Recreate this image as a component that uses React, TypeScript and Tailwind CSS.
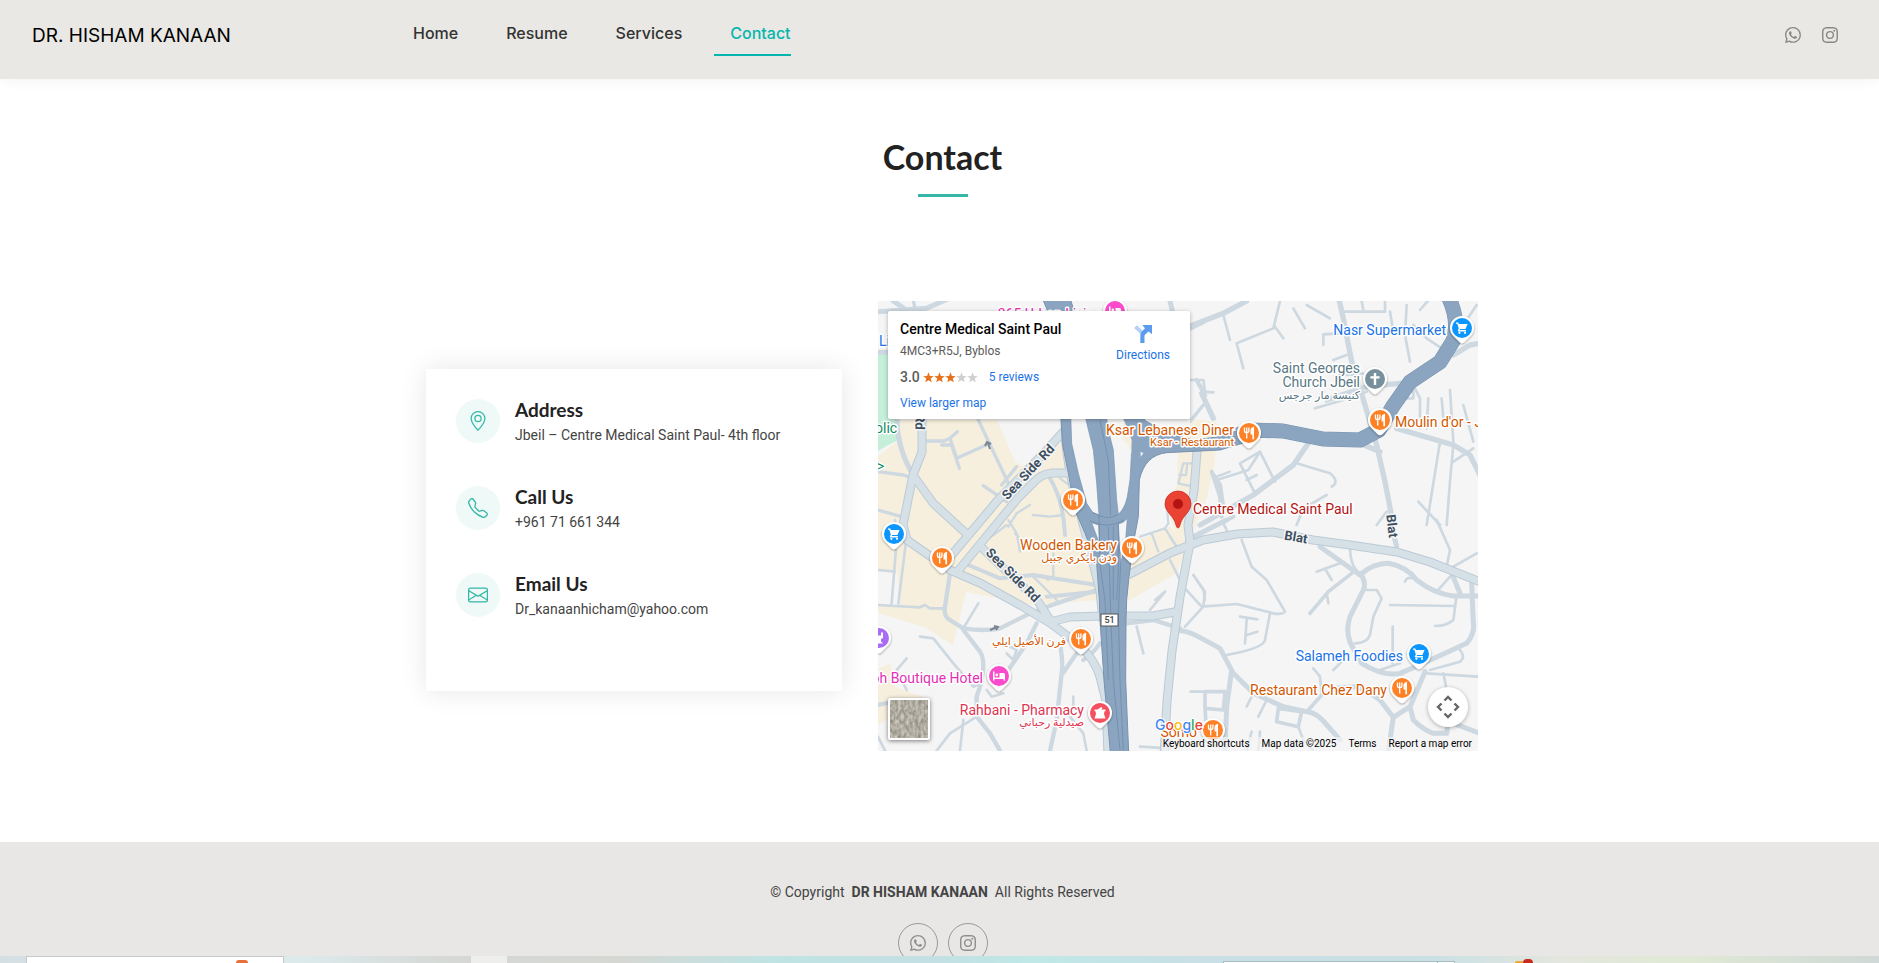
import React from "react";
import { BsWhatsapp, BsInstagram, BsGeoAlt, BsTelephone, BsEnvelope } from "react-icons/bs";
import type { IconType } from "react-icons";

const NAV = ["Home", "Resume", "Services"];

const INFO: { icon: IconType; title: string; text: string }[] = [
  { icon: BsGeoAlt, title: "Address", text: "Jbeil – Centre Medical Saint Paul- 4th floor" },
  { icon: BsTelephone, title: "Call Us", text: "+961 71 661 344" },
  { icon: BsEnvelope, title: "Email Us", text: "Dr_kanaanhicham@yahoo.com" },
];

type Kind = "food" | "cart" | "church" | "bed" | "pharmacy" | "purple";

const KIND_COLOR: Record<Kind, string> = {
  food: "#ff8126",
  cart: "#0b96ff",
  church: "#78909c",
  bed: "#f94bcb",
  pharmacy: "#f5505f",
  purple: "#a96cf5",
};

const MARKERS: { kind: Kind; x: number; y: number }[] = [
  { kind: "bed", x: 237, y: 10 },
  { kind: "cart", x: 584, y: 27 },
  { kind: "church", x: 497, y: 78 },
  { kind: "food", x: 502, y: 119 },
  { kind: "food", x: 371, y: 132 },
  { kind: "food", x: 195, y: 199 },
  { kind: "cart", x: 16, y: 233 },
  { kind: "food", x: 64, y: 257 },
  { kind: "food", x: 254, y: 247 },
  { kind: "food", x: 203, y: 338 },
  { kind: "purple", x: 1, y: 337 },
  { kind: "bed", x: 121, y: 375 },
  { kind: "pharmacy", x: 222, y: 412 },
  { kind: "cart", x: 541, y: 353 },
  { kind: "food", x: 524, y: 387 },
  { kind: "food", x: 335, y: 429 },
];

type Label = { t: string; x: number; y: number; c: string; s?: number; end?: boolean };

const LABELS: Label[] = [
  { t: "365 Urban Living", x: 224, y: 18, c: "#e22fb5", end: true },
  { t: "Li", x: 1, y: 45, c: "#1a73e8" },
  { t: "olic", x: -3, y: 132, c: "#0f8a5f", s: 14 },
  { t: ">", x: -1, y: 170, c: "#0f8a5f", s: 14 },
  { t: "Nasr Supermarket", x: 568, y: 34, c: "#1a73e8", end: true },
  { t: "Saint Georges", x: 482, y: 72, c: "#5a7885", end: true },
  { t: "Church Jbeil", x: 482, y: 86, c: "#5a7885", end: true },
  { t: "كنيسة مار جرجس", x: 482, y: 98, c: "#5a7885", s: 11, end: true },
  { t: "Moulin d'or - Jbeil", x: 517, y: 126, c: "#d35800" },
  { t: "Ksar Lebanese Diner", x: 356, y: 134, c: "#d35800", end: true },
  { t: "Ksar - Restaurant", x: 356, y: 145, c: "#d35800", s: 11, end: true },
  { t: "Centre Medical Saint Paul", x: 315, y: 213, c: "#b31412" },
  { t: "Wooden Bakery", x: 239, y: 249, c: "#d35800", end: true },
  { t: "ودن بايكري جبيل", x: 239, y: 260, c: "#d35800", s: 11, end: true },
  { t: "فرن الأصيل ايلي", x: 188, y: 344, c: "#d35800", s: 11, end: true },
  { t: "ph Boutique Hotel", x: 105, y: 382, c: "#e22fb5", end: true },
  { t: "Rahbani - Pharmacy", x: 206, y: 414, c: "#e0344f", end: true },
  { t: "صيدلية رحباني", x: 206, y: 425, c: "#e0344f", s: 11, end: true },
  { t: "Salameh Foodies", x: 525, y: 360, c: "#1a73e8", end: true },
  { t: "Restaurant Chez Dany", x: 509, y: 394, c: "#d35800", end: true },
  { t: "Somo", x: 319, y: 436, c: "#d35800", end: true },
];

const STREETS = [
  { t: "Sea Side Rd", x: 150, y: 171, r: -47 },
  { t: "Sea Side Rd", x: 135, y: 274, r: 45 },
  { t: "Blat", x: 418, y: 236, r: 10 },
  { t: "Blat", x: 514, y: 225, r: 83 },
  { t: "Rd", x: 42, y: 121, r: 92 },
];

function Glyph({ kind }: { kind: Kind }) {
  switch (kind) {
    case "food":
      return (
        <g fill="none" stroke="#fff" strokeWidth="1.3">
          <path d="M-4.5-5.5v3.5q0 1.6 2.2 1.6T-.1-2v-3.5M-2.3-5.5V5.5" />
          <path d="M2.2.8V-3.4Q2.4-5 4.4-5.4V5.5h-.4V.8Z" fill="#fff" />
        </g>
      );
    case "cart":
      return (
        <g fill="#fff">
          <path d="M-6-5.500h2.300l.6 1.400H5.600L3.400 1H-1.800l-.6 1.100H4v1.300h-7.600q-1-.5-.4-1.500l.8-1.500L-4.700-4.200H-6Z" />
          <circle cx="-2.600" cy="4.800" r="1.100" />
          <circle cx="3" cy="4.800" r="1.100" />
        </g>
      );
    case "church":
      return <path d="M-1.200-6h2.400v3.200h3.400v2.400H1.200V6h-2.400V-.4h-3.400v-2.400h3.400Z" fill="#fff" />;
    case "bed":
      return (
        <g>
          <path d="M-6-4.500h1.500v6h5v-4.500h4q1.500 0 1.500 1.500V4.500H4.500v-1.500h-9v1.500H-6Z" fill="#fff" />
          <circle cx="-2.200" cy="-1" r="1.400" fill="#fff" />
        </g>
      );
    case "pharmacy":
      return <path d="M-5.500-3.500h3L1.200-6l1.200 1-1 1.500h4.100v1.700h-1L4 1l1.500 4.500h-11L-4 1l-.5-2.800h-1Z" fill="#fff" />;
    default:
      return <path d="M-4-5.500h2v3h4v-3h2V0L2 1v2.500l2 2h-8l2-2V1l-2-1Z" fill="#fff" />;
  }
}

function MapDrawing() {
  return (
    <svg
      viewBox="0 0 600 450"
      className="block h-auto w-full font-['Roboto','DejaVu_Sans',sans-serif]"
      role="img"
      aria-label="Map of Byblos"
    >
      <defs>
        <filter id="markerShadow" x="-30%" y="-30%" width="160%" height="170%">
          <feDropShadow dx="0" dy="1" stdDeviation="1" floodColor="#000" floodOpacity=".4" />
        </filter>
      </defs>
      <rect width="600" height="450" fill="#f5f5f5" />

      {/* built-up areas and the park */}
      <g fill="#f7efdd">
        <path d="M0 312 46 326 75 344 88 291 155 304 222 299V270L199 215 190 172 184 142 172 148 150 167 137 161 119 119H20V140L0 155Z" />
        <path d="M244 117H254V146L246 150Z" />
        <path d="M300 116 339 121 337 161 328 200 316 228 300 238 288 205 299 185 300 150Z" />
        <path d="M250 244 292 226 310 240 305 256 299 272 250 300Z" />
        <path d="M0 368 12 362 17 386 45 396 0 424Z" />
      </g>
      <path d="M0 269 19 269 22 304 0 304Z" fill="#f5f5f5" />
      <path d="M0 53H22V132Q22 140 12 143L0 150Z" fill="#c5efd8" />

      {/* local streets, north-west sheet */}
      <g transform="translate(-8 -6) scale(.33333)" fill="none" stroke="#cdd8e0" strokeLinecap="round" strokeLinejoin="round">
        <g strokeWidth="15">
          <path d="M24 50 170 40 260 0M80 375Q85 470 130 540M70 18 130 60M24 172H60" />
          <path d="M900 18 910 60M960 100 1000 80" />
        </g>
        <g strokeWidth="10">
          <path d="M160 438H222L240 430 260 490 360 445M240 430 262 410M215 450H240M245 450 268 520M325 375 420 575M24 530 100 540 130 550M340 572 410 620M440 515 395 570M24 645 95 665M130 18 140 60" />
          <path d="M960 380 1000 330" />
        </g>
      </g>

      {/* local streets around the trunk junction */}
      <g transform="translate(22 99) scale(.33333)" fill="none" stroke="#cdd8e0" strokeLinecap="round" strokeLinejoin="round">
        <path d="M450 235Q490 300 495 405M205 495 300 535 400 525 460 535 590 555M440 590 590 575M935 215 960 290 965 350M880 410 1000 350" strokeWidth="12" />
        <path d="M480 235 520 265M398 345 450 350 490 345M390 315 350 340 325 380M325 360 350 400 360 455M320 375 260 420M345 400 355 410M460 460V535M400 530 440 570 470 600M425 525 445 540M800 310 805 370 795 385 720 410M755 400 775 455M795 385 830 440M850 190 835 250 870 258M850 190H880M862 190 858 225 838 225M950 230 990 215M880 525 910 570 915 600M765 600 795 575" strokeWidth="7" />
      </g>

      {/* local streets, north-east sheet */}
      <g transform="translate(302 -6) scale(.33333)" fill="none" stroke="#cdd8e0" strokeLinecap="round" strokeLinejoin="round">
        <g strokeWidth="16">
          <path d="M0 105 130 55 200 18M478 18 490 70 515 200 555 330 590 450 615 560 640 690M385 445 340 510 220 600 60 690M540 445 600 470M440 315 560 275 690 262M650 400 820 450 870 480 900 540M820 180 870 150 900 145M65 295 100 370" />
        </g>
        <g strokeWidth="13">
          <path d="M100 540 120 570 130 640M50 255 75 300" />
        </g>
        <g strokeWidth="8">
          <path d="M130 60 150 135M300 18 280 100 170 145 190 220M285 95 310 130M340 40 375 100M380 30 450 70M490 50H615V0M430 150V118L520 112M545 18 550 45M630 50 640 110M680 30 675 120 690 200M720 45 750 10M700 90 740 130 800 170M405 340 480 318 560 290M460 195 500 180M500 240 550 235M415 310 430 290M70 290 100 292M30 255H70L75 290" />
          <path d="M350 505 450 535Q480 560 455 575M110 555 205 525 240 470M180 505 225 595M180 505 240 470 285 560M200 555 230 540M670 285 700 290V310L640 310M745 310 740 400M780 440 740 690M820 450 810 560 800 690M810 285 820 440M850 330 880 440M700 270 720 310 720 400M860 75 890 30M785 310 790 370M440 600 370 640 350 690M590 690 620 650M715 620 780 690M820 500 880 460" />
        </g>
      </g>

      {/* local streets, south-west sheet */}
      <g transform="translate(-8 219) scale(.33333)" fill="none" stroke="#cdd8e0" strokeLinecap="round" strokeLinejoin="round">
        <g strokeWidth="13">
          <path d="M240 160 225 260Q220 290 240 300L280 325Q345 335 390 325L480 280 560 250 680 210M500 310 470 370 415 450M280 330 330 395Q350 425 330 500L320 530V590L360 640 390 692M570 370Q580 430 575 460L560 600 540 692M575 465 620 400M690 370Q670 400 640 420M770 310 850 300 930 325M24 555 70 545" />
        </g>
        <g strokeWidth="8">
          <path d="M24 150 75 155M75 0 80 60 65 250M110 50 85 250M24 255 150 262 165 255 180 265 225 265M325 250 280 325M150 350 190 355 250 430 310 500 335 490M110 415 80 450 110 510M840 270 885 215M800 320 820 400M410 400 430 420 440 390 410 375M350 510 365 530 400 520M610 530V560M600 590 640 640 650 692M200 692 240 640 320 590M280 600 270 692M810 680 900 685M24 650 45 692" />
        </g>
      </g>

      {/* local streets, south-east sheet */}
      <g transform="translate(292 219) scale(.33333)" fill="none" stroke="#cdd8e0" strokeLinecap="round" strokeLinejoin="round">
        <g strokeWidth="15">
          <path d="M70 50 170 0M680 80 670 40 655 0M450 80 570 165Q610 130 655 130 710 140 740 180 790 220 850 228H930M570 160Q590 185 580 210L540 290Q520 350 560 400L575 430Q640 470 690 460L760 430 890 370Q915 340 910 310L905 190M845 160 870 220M10 330Q50 330 85 350L150 385 190 460 250 520 340 560 410 575Q440 575 475 620L510 660M765 455 720 560 670 592 630 540Q590 510 560 500L490 505M670 592 655 692M720 560 730 600Q760 630 790 640H830L835 600M185 450 170 560 165 692M850 610 930 640" />
        </g>
        <g strokeWidth="11">
          <path d="M545 160 475 215 420 280M105 515H165L160 570 105 565ZM105 565 110 640M325 565 395 575 385 620 320 605ZM410 575 460 520" />
        </g>
        <g strokeWidth="8">
          <path d="M215 60 245 140 290 180 345 275Q335 285 310 280L200 252 95 260 40 200 0 120M70 165 105 215 100 260 45 320M170 405Q280 385 285 360L300 280M210 290 262 298M230 300 225 370M230 345 262 335M440 155 510 130M465 145 485 180M470 220 475 250M540 80Q540 140 570 160M705 185Q710 170 730 175M585 210H620L635 235 610 290 600 345Q590 370 555 370M660 255 855 258M860 225 850 300Q830 318 795 318M668 320V430M800 0 840 90 830 140 850 160M850 140 920 100M800 215 840 170M865 385Q890 410 870 425L780 450M770 460 930 470M820 460 830 510M430 445 450 470 455 520M490 450 520 420M230 560 250 520M245 635 230 692M270 635 265 692M62 515H110M290 540 265 590M630 450 690 430M385 620 400 660 430 692M0 50 20 80M160 10 175 40" />
        </g>
      </g>

      {/* collector roads: an outline stroke below a lighter one */}
      {[
        { c: "#bccad6", w: 9 },
        { c: "#d6e0e7", w: 7 },
      ].map((pass) => (
        <g key={pass.w} fill="none" stroke={pass.c} strokeWidth={pass.w} strokeLinejoin="round">
          <path d="M44 115V151L35 174 25 224 29 239 72 269 102 282 142 304 172 322 199 342Q217 358 222 376L228 400 230 455" />
          <path d="M186 130 166 152 120 199 67 262M194 172H174Q163 173 155 182L140 197 80 270M35 174 55 202 92 236M100 243 120 262 159 299 174 322" />
          <path d="M172 321 192 316 225 315 275 315 302 310" />
          <path d="M250 274 292 252 325 239 359 233 395 231 435 239 472 244 519 251 552 261 605 282" />
          <path d="M319 150 316 190 310 224 312 242 302 296 294 350 289 400 286 455" />
          <path d="M187 130Q189 170 203 215L222 290 225 320" />
        </g>
      ))}

      {/* trunk roads */}
      <path d="M163-6H191L206 40H182Z" fill="#8ba5c1" stroke="#7692b0" />
      <g transform="translate(22 99) scale(.33333)">
        <path
          d="M483 0V60L487 130 505 220 525 330 555 400 590 490 598 600 600 660 612 840 633 1080H687L677 840 678 660 680 600 687 530 700 430 715 350 718 240Q735 165 800 158L960 150 1060 120V75L960 110 880 120 790 95 735 60 700 0Z"
          fill="#8ba5c1"
          stroke="#7692b0"
          strokeWidth="3"
        />
        <g fill="#f5f5f5" stroke="#7692b0" strokeWidth="2">
          <path d="M512 40 515 130 535 220 560 310 578 337 597 345 590 250 580 150 558 60V40Z" />
          <path d="M618 40 625 90 640 150 650 300 655 343Q675 325 682 290L690 240 695 150 672 60V40Z" />
          <path d="M575 368 596 375 598 430Z" />
          <path d="M655 372Q670 370 682 355L676 430 662 490Z" />
        </g>
        <path d="M672 60 695 120 694 160 682 130 668 120Z" fill="#f7efdd" />
        <path d="M722 155 730 160 722 170ZM735 60 790 40 870 50V95L790 90Z" fill="#f5f5f5" />
        <path
          d="M600 60 625 180 632 345M578 337Q620 365 655 343M570 362Q620 390 672 360M597 345 600 480M655 370V520L650 600M640 380V600M625 380 632 640 640 840 660 1050M598 480 615 600 625 840M662 490 655 640 660 840 670 1050"
          fill="none"
          stroke="#6f8dae"
          strokeWidth="2.500"
        />
      </g>
      <g fill="none" strokeLinejoin="round">
        <path d="M360 134 372 129 405 130 445 138 482 139 501 129 515 105 532 81 562 61 575 40Q582 20 570-5" strokeWidth="15" stroke="#7692b0" />
        <path d="M360 134 372 129 405 130 445 138 482 139 501 129 515 105 532 81 562 61 575 40Q582 20 570-5" strokeWidth="14" stroke="#8ba5c1" />
      </g>
      <g fill="none" stroke="#7d8791" strokeWidth="2">
        <path d="M112 148 110 142M107 145 109 141 113 143" />
        <path d="M112 329 119 326M116 325 120 326 118 329" />
      </g>

      <g>
        <rect x="223" y="313" width="17" height="12" fill="#fff" stroke="#555" />
        <text x="231.500" y="322" textAnchor="middle" className="text-[9px] font-medium" fill="#444">
          51
        </text>
      </g>

      <g stroke="#f5f5f5" strokeWidth="3" strokeLinejoin="round" paintOrder="stroke" fill="#3d4f60" className="text-[13px] font-bold">
        {STREETS.map((s) => (
          <text key={s.t + s.x} transform={`translate(${s.x} ${s.y}) rotate(${s.r})`} textAnchor="middle" dominantBaseline="central">
            {s.t}
          </text>
        ))}
      </g>

      <g stroke="#fff" strokeWidth="3" strokeLinejoin="round" paintOrder="stroke">
        {LABELS.map((l) => (
          <text key={l.t} x={l.x} y={l.y} fill={l.c} fontSize={l.s ?? 14} textAnchor={l.end ? "end" : "start"}>
            {l.t}
          </text>
        ))}
      </g>

      {MARKERS.map((m) => (
        <g key={`${m.x}-${m.y}`} transform={`translate(${m.x} ${m.y})`}>
          <path
            d="M0-12A12 12 0 0 1 12 0Q12 5 7.500 9L2 14.500Q0 16 -2 14.500L-7.500 9Q-12 5 -12 0A12 12 0 0 1 0-12Z"
            fill="#fff"
            filter="url(#markerShadow)"
          />
          <circle r="10" fill={KIND_COLOR[m.kind]} />
          <Glyph kind={m.kind} />
        </g>
      ))}

      <g transform="translate(300 203)">
        <path
          d="M0-13A13 13 0 0 1 13 0C13 8 4 12 2 21Q1.500 24 0 24T-2 21C-4 12-13 8-13 0A13 13 0 0 1 0-13Z"
          fill="#ea4335"
          stroke="#c5221f"
          strokeWidth=".7"
        />
        <circle r="5" fill="#b31412" />
      </g>

      <text x="277" y="429" stroke="#fff" strokeWidth="2" paintOrder="stroke" className="font-['Inter',sans-serif] text-[14px] font-medium">
        <tspan fill="#4285f4">G</tspan>
        <tspan fill="#ea4335">o</tspan>
        <tspan fill="#fbbc04">o</tspan>
        <tspan fill="#4285f4">g</tspan>
        <tspan fill="#34a853">l</tspan>
        <tspan fill="#ea4335">e</tspan>
      </text>
    </svg>
  );
}

function Star({ on }: { on: boolean }) {
  return (
    <svg viewBox="0 0 12 12" className="size-[11px]" aria-hidden="true">
      <path d="M6 .3 7.500 4.300 11.800 4.500 8.400 7.100 9.600 11.300 6 8.900 2.400 11.300 3.600 7.100.2 4.500 4.500 4.300Z" fill={on ? "#e7711b" : "#d0d0d0"} />
    </svg>
  );
}

function MapCard() {
  return (
    <div className="absolute top-[10px] left-[10px] flex w-[302px] justify-between rounded-[2px] bg-white pt-2 pr-5 pb-2 pl-3 text-[12px] leading-4 shadow-[0_1px_4px_rgba(0,0,0,0.3)]">
      <div>
        <h3 className="text-[14px] leading-5 font-medium text-black">Centre Medical Saint Paul</h3>
        <p className="mt-1 text-[#5b5b5b]">4MC3+R5J, Byblos</p>
        <p className="mt-[10px] flex items-center">
          <span className="mr-[3px] text-[14px] font-medium text-[#5b5b5b]">3.0</span>
          {[1, 2, 3, 4, 5].map((n) => (
            <Star key={n} on={n <= 3} />
          ))}
          <a href="#reviews" className="ml-[11px] text-[#1a73e8]">5 reviews</a>
        </p>
        <a href="#map" className="mt-[10px] block text-[#1a73e8]">View larger map</a>
      </div>
      <a href="#directions" className="flex flex-col items-center pt-[6px] text-[#1a73e8]">
        <svg viewBox="0 0 18 18" className="mb-1 size-[18px]" aria-hidden="true">
          <path d="M.2 3 3 .2 9 6.200 6.500 9Z" fill="#b5d0f8" />
          <path d="M6.300 18V10Q6.300 8 7.800 6.500L11 3.300 8.200 0H18V9.200L14.500 6.400 11 9.800Q10.500 10.300 10.500 11V18Z" fill="#5c9cec" />
        </svg>
        Directions
      </a>
    </div>
  );
}

function MapPanel() {
  return (
    <div className="relative w-[600px] shrink-0 overflow-hidden font-['Roboto',sans-serif]">
      <MapDrawing />
      <MapCard />
      <button
        aria-label="Show satellite imagery"
        className="absolute bottom-[11px] left-[10px] size-[42px] overflow-hidden rounded-[2px] border-2 border-white bg-[#aba79b] shadow-[0_1px_4px_rgba(0,0,0,0.5)]"
      >
        <svg viewBox="0 0 38 38" className="size-full" aria-hidden="true">
          <filter id="ground" x="0" y="0" width="100%" height="100%" colorInterpolationFilters="sRGB">
            <feTurbulence type="fractalNoise" baseFrequency=".35 .2" numOctaves="3" seed="4" />
            <feColorMatrix values=".4 0 0 0 .49 .4 0 0 0 .475 .4 0 0 0 .43 0 0 0 0 1" />
          </filter>
          <rect width="38" height="38" filter="url(#ground)" />
        </svg>
      </button>
      <button
        aria-label="Map camera controls"
        className="absolute right-[10px] bottom-6 size-10 rounded-full bg-white shadow-[0_1px_4px_rgba(0,0,0,0.3)]"
      >
        <svg viewBox="-20 -20 40 40" className="size-full" fill="none" stroke="#666" strokeWidth="2.400" aria-hidden="true">
          <path d="M-3.500-6.500 0-10 3.500-6.500M-3.500 6.500 0 10 3.500 6.500M-6.500-3.500-10 0-6.500 3.500M6.500-3.500 10 0 6.500 3.500" />
        </svg>
      </button>
      <div className="absolute right-0 bottom-0 flex h-[14px] items-center gap-3 bg-[#f5f5f5]/70 pr-[6px] pl-px text-[10px] leading-[14px] text-black">
        <button>Keyboard shortcuts</button>
        <span>Map data ©2025</span>
        <a href="#terms">Terms</a>
        <a href="#report">Report a map error</a>
      </div>
    </div>
  );
}

function Header() {
  return (
    <header className="relative z-10 flex h-[79px] shrink-0 items-start bg-[#e9e8e4] pr-[41px] pl-8 font-['Inter',sans-serif] shadow-[0_0_14px_rgba(0,0,0,0.06)]">
      <a href="#home" className="w-[381px] pt-[21px] text-[19px] leading-[30px] text-black">DR. HISHAM KANAAN</a>
      <nav className="flex flex-1 text-[16px] leading-6 font-medium text-[#333]">
        {NAV.map((item) => (
          <a key={item} href={`#${item.toLowerCase()}`} className="mr-12 pt-[21px]">{item}</a>
        ))}
        <a href="#contact" className="-ml-4 border-b-2 border-[#06b6ae] pt-[21px] pb-[9px] pl-4 text-[#06b6ae]">Contact</a>
      </nav>
      <div className="flex gap-[21px] pt-[27px] text-[16px] text-[#888]">
        <a href="#whatsapp" aria-label="WhatsApp"><BsWhatsapp /></a>
        <a href="#instagram" aria-label="Instagram"><BsInstagram /></a>
      </div>
    </header>
  );
}

function Footer() {
  return (
    <footer className="flex flex-col items-center bg-[#e8e7e5] pt-10 pb-10 pl-[6px] text-[14px] leading-[21px] text-[#444]">
      <p className="flex gap-[7px]">
        <span>© Copyright</span>
        <strong className="font-bold">DR HISHAM KANAAN</strong>
        <span>All Rights Reserved</span>
      </p>
      <div className="mt-5 flex gap-[10px] text-[16px] text-[#8f8f8e]">
        <a href="#whatsapp" aria-label="WhatsApp" className="flex size-10 items-center justify-center rounded-full border border-[#999]"><BsWhatsapp /></a>
        <a href="#instagram" aria-label="Instagram" className="flex size-10 items-center justify-center rounded-full border border-[#999]"><BsInstagram /></a>
      </div>
    </footer>
  );
}

function DesktopEdge() {
  return (
    <div className="flex h-[7px] shrink-0 items-end overflow-hidden bg-[linear-gradient(90deg,#d3dfe2_0%,#dceaec_16%,#d5d8d5_24%,#d5d7d3_33%,#bfe4e4_41%,#c3dfe3_49%,#bfe8e7_55%,#c8e0e6_63%,#c9e0e5_76%,#e3e6dd_83%,#dfe9d4_90%,#cfd8d6_100%)]">
      <div className="ml-[26px] flex h-[7px] w-[258px] items-end border border-b-0 border-[#c3c9cc] bg-white">
        <span className="ml-[209px] h-[3px] w-3 rounded-t-full bg-[#e8703a]" />
      </div>
      <div className="ml-[187px] h-[7px] w-9 bg-[#eeefec]" />
      <div className="ml-[716px] flex h-[2px] w-[232px] justify-end border-x border-t border-[#a9bcbd] bg-white pr-4">
        <span className="w-px bg-[#a9bcbd]" />
      </div>
      <span className="ml-[60px] h-[2px] w-2 rounded-tl-full bg-[#f0a830]" />
      <span className="h-[4px] w-[10px] rounded-t-full bg-[#c92a1e]" />
    </div>
  );
}

export default function App() {
  return (
    <div className="flex h-screen flex-col overflow-hidden bg-white font-['Roboto',sans-serif] antialiased">
      <Header />
      <div className="min-h-0 flex-1 overflow-hidden">
        <main>
          <div className="flex flex-col items-center pt-[59px] pl-[6px]">
            <h1 className="font-['Lato',sans-serif] text-[34px] leading-[38px] font-bold text-[#222]">Contact</h1>
            <span className="mt-[18px] h-[3px] w-[50px] bg-[#34b7a7]" />
          </div>
          <section className="mt-[104px] flex items-center justify-center gap-9 pb-[91px] pl-[25px]">
            <div className="mt-[8px] flex w-[416px] flex-col gap-[39px] bg-white px-[30px] pt-[30px] pb-[70px] shadow-[0_0_25px_rgba(0,0,0,0.1)]">
              {INFO.map(({ icon: Icon, title, text }) => (
                <div key={title} className="flex h-12 gap-[15px]">
                  <span className="flex size-11 shrink-0 items-center justify-center rounded-full bg-[#eff9f8] text-[20px] text-[#34b7a7]">
                    <Icon />
                  </span>
                  <div>
                    <h2 className="font-['Lato',sans-serif] text-[19px] leading-[22px] font-bold text-[#222]">{title}</h2>
                    <p className="mt-1 text-[14px] leading-5 text-[#444]">{text}</p>
                  </div>
                </div>
              ))}
            </div>
            <MapPanel />
          </section>
        </main>
        <Footer />
      </div>
      <DesktopEdge />
    </div>
  );
}
